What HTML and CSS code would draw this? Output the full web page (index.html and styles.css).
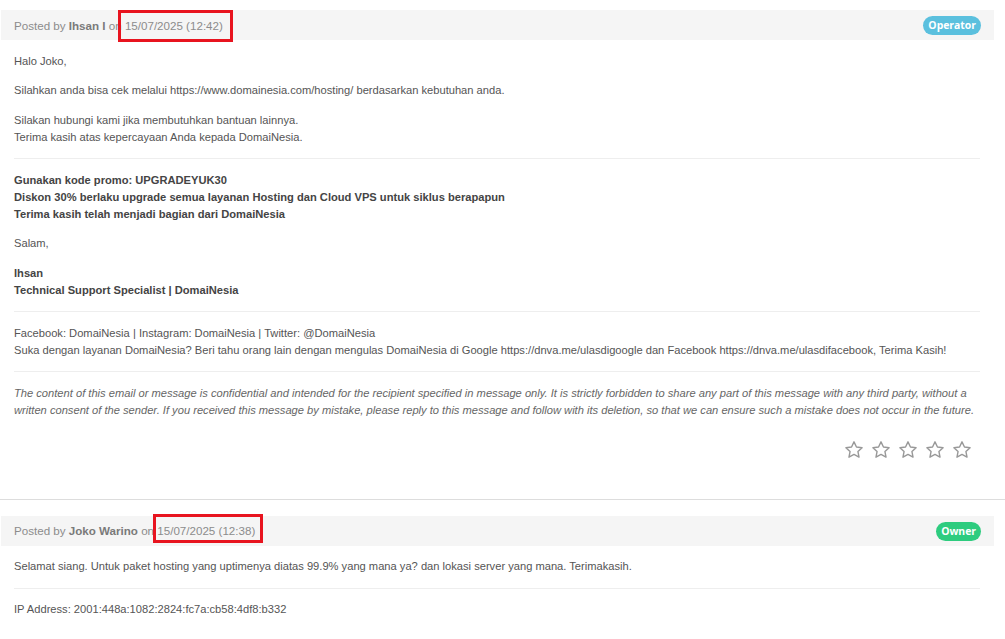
FILE: index.html
```html
<!DOCTYPE html>
<html lang="id">
<head>
<meta charset="utf-8">
<title>Ticket Replies</title>
<link rel="stylesheet" href="styles.css">
</head>
<body>
<div class="thread">
  <div class="msg">
    <div class="msg-head">
      <div class="posted">Posted by <strong>Ihsan I</strong> on <span class="date date-a">15/07/2025 (12:42)</span></div>
      <span class="badge badge-operator">Operator</span>
    </div>
    <div class="msg-body">
      <p>Halo Joko,</p>
      <p>Silahkan anda bisa cek melalui https://www.domainesia.com/hosting/ berdasarkan kebutuhan anda.</p>
      <p>Silakan hubungi kami jika membutuhkan bantuan lainnya.<br>Terima kasih atas kepercayaan Anda kepada DomaiNesia.</p>
      <hr class="rule">
      <p class="strong">Gunakan kode promo: UPGRADEYUK30<br>Diskon 30% berlaku upgrade semua layanan Hosting dan Cloud VPS untuk siklus berapapun<br>Terima kasih telah menjadi bagian dari DomaiNesia</p>
      <p>Salam,</p>
      <p class="strong">Ihsan<br>Technical Support Specialist | DomaiNesia</p>
      <hr class="rule">
      <p>Facebook: DomaiNesia | Instagram: DomaiNesia | Twitter: @DomaiNesia<br>Suka dengan layanan DomaiNesia? Beri tahu orang lain dengan mengulas DomaiNesia di Google https://dnva.me/ulasdigoogle dan Facebook https://dnva.me/ulasdifacebook, Terima Kasih!</p>
      <hr class="rule">
      <p class="disclaimer">The content of this email or message is confidential and intended for the recipient specified in message only. It is strictly forbidden to share any part of this message with any third party, without a written consent of the sender. If you received this message by mistake, please reply to this message and follow with its deletion, so that we can ensure such a mistake does not occur in the future.</p>
      <div class="rating">
        <svg class="star" viewBox="0 0 24 24"><path d="M12 2.2l2.95 6.2 6.75.85-4.95 4.65 1.27 6.7L12 17.3l-6.02 3.3 1.27-6.7L2.3 9.25l6.75-.85z"/></svg>
        <svg class="star" viewBox="0 0 24 24"><path d="M12 2.2l2.95 6.2 6.75.85-4.95 4.65 1.27 6.7L12 17.3l-6.02 3.3 1.27-6.7L2.3 9.25l6.75-.85z"/></svg>
        <svg class="star" viewBox="0 0 24 24"><path d="M12 2.2l2.95 6.2 6.75.85-4.95 4.65 1.27 6.7L12 17.3l-6.02 3.3 1.27-6.7L2.3 9.25l6.75-.85z"/></svg>
        <svg class="star" viewBox="0 0 24 24"><path d="M12 2.2l2.95 6.2 6.75.85-4.95 4.65 1.27 6.7L12 17.3l-6.02 3.3 1.27-6.7L2.3 9.25l6.75-.85z"/></svg>
        <svg class="star" viewBox="0 0 24 24"><path d="M12 2.2l2.95 6.2 6.75.85-4.95 4.65 1.27 6.7L12 17.3l-6.02 3.3 1.27-6.7L2.3 9.25l6.75-.85z"/></svg>
      </div>
    </div>
  </div>
</div>
<div class="divider"></div>
<div class="thread">
  <div class="msg msg-second">
    <div class="msg-head">
      <div class="posted">Posted by <strong>Joko Warino</strong> on <span class="date date-b">15/07/2025 (12:38)</span></div>
      <span class="badge badge-owner">Owner</span>
    </div>
    <div class="msg-body">
      <p>Selamat siang. Untuk paket hosting yang uptimenya diatas 99.9% yang mana ya? dan lokasi server yang mana. Terimakasih.</p>
      <hr class="rule">
      <p>IP Address: 2001:448a:1082:2824:fc7a:cb58:4df8:b332</p>
    </div>
  </div>
</div>
</body>
</html>
```

FILE: styles.css
```css
html, body {
  margin: 0;
  padding: 0;
  background: #ffffff;
}

body {
  font-family: "Liberation Sans", Arial, sans-serif;
  font-size: 11.15px;
  color: #555555;
  overflow: hidden;
}

.thread {
  margin-left: 1px;
  width: 993px;
}

.msg {
  padding-top: 10px;
  padding-bottom: 39px;
}

.msg-second {
  padding-top: 16px;
  padding-bottom: 0;
}

.msg-head {
  display: flex;
  align-items: center;
  justify-content: space-between;
  height: 30px;
  background: #f5f5f5;
  padding: 0 13px 0 13px;
}

.posted {
  color: #8c8c8c;
  font-size: 11.6px;
  line-height: 30px;
  padding-top: 1px;
}

.posted strong {
  color: #7a7a7a;
  font-weight: bold;
}

.date {
  position: relative;
}

.date::after {
  content: "";
  position: absolute;
  border: 3px solid #e8141f;
  box-sizing: border-box;
}

.date-a::after {
  left: -7px;
  right: -10px;
  top: -9px;
  bottom: -10px;
}

.date-b::after {
  left: -4px;
  right: -8px;
  top: -10px;
  bottom: -6px;
}

.badge {
  display: inline-block;
  height: 19px;
  line-height: 19px;
  border-radius: 10px;
  padding: 0 5px;
  color: #ffffff;
  font-family: "Open Sans", "Liberation Sans", sans-serif;
  font-size: 10.4px;
  font-weight: bold;
  margin-top: 1px;
}

.badge-operator {
  background: #5bc0de;
}

.badge-owner {
  background: #2ecc7f;
}

.msg-body {
  padding: 12.5px 14px 0 13px;
}

.msg-body p {
  margin: 0 0 12.5px;
  line-height: 17px;
}

.msg-body p.strong {
  font-weight: bold;
  color: #444444;
}

.msg-body p.disclaimer {
  font-style: italic;
  color: #666666;
}

.rule {
  border: 0;
  border-top: 1px solid #eeeeee;
  margin: 0 0 12.5px;
  height: 0;
}

.rating {
  display: flex;
  justify-content: flex-end;
  gap: 7px;
  margin-top: 21px;
  padding-right: 8px;
  height: 20px;
}

.star {
  width: 20px;
  height: 20px;
  fill: none;
  stroke: #999999;
  stroke-width: 1.7;
  stroke-linejoin: round;
}

.divider {
  height: 1px;
  background: #dddddd;
  width: 100%;
}
```
